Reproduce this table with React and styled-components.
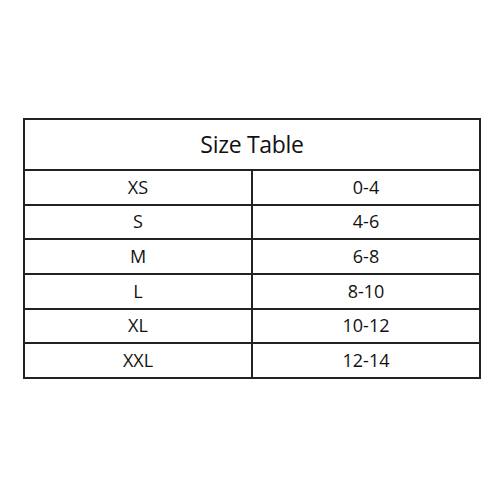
import React from "react";
import styled, { createGlobalStyle } from "styled-components";

const GlobalStyle = createGlobalStyle`
  html, body {
    margin: 0;
    padding: 0;
    background: #ffffff;
  }
  body {
    font-family: "Open Sans", "Noto Sans", sans-serif;
    color: #111;
  }
`;

const Page = styled.div`
  width: 500px;
  height: 500px;
  display: flex;
  justify-content: center;
  align-items: flex-start;
  padding-top: 118px;
  padding-left: 4px;
  box-sizing: border-box;
`;

const Table = styled.table`
  width: 458px;
  height: 261px;
  border-collapse: collapse;
  border: 2px solid #222;
  table-layout: fixed;
  line-height: 1.2;
`;

const HeadCell = styled.th`
  height: 49px;
  font-weight: 400;
  font-size: 23px;
  letter-spacing: -0.3px;
  text-align: center;
  border-bottom: 2px solid #222;
  padding: 0;
`;

const Cell = styled.td`
  height: 32px;
  font-size: 18px;
  text-align: center;
  padding: 0;
  border: 2px solid #222;
`;

const sizes = [
  ["XS", "0-4"],
  ["S", "4-6"],
  ["M", "6-8"],
  ["L", "8-10"],
  ["XL", "10-12"],
  ["XXL", "12-14"],
];

const App = () => {
  return (
    <>
      <GlobalStyle />
      <Page>
        <Table>
          <thead>
            <tr>
              <HeadCell colSpan={2}>Size Table</HeadCell>
            </tr>
          </thead>
          <tbody>
            {sizes.map(([size, range]) => (
              <tr key={size}>
                <Cell>{size}</Cell>
                <Cell>{range}</Cell>
              </tr>
            ))}
          </tbody>
        </Table>
      </Page>
    </>
  );
};

export default App;
